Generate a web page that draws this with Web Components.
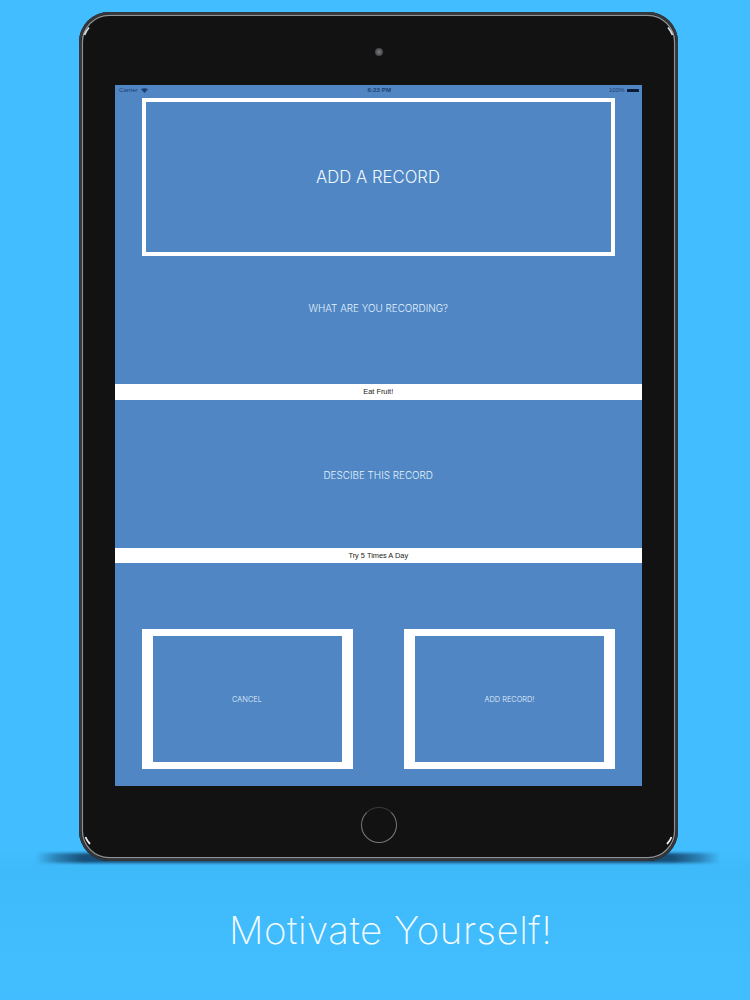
<!DOCTYPE html>
<html lang="en">
<head>
<meta charset="utf-8">
<title>Motivate Yourself!</title>
<style>
html,body{margin:0;padding:0;background:#42bdff;}
</style>
</head>
<body>
<promo-page>
  <tablet-frame>
    <status-bar></status-bar>
    <title-box>ADD A RECORD</title-box>
    <record-field label="WHAT ARE YOU RECORDING?" value="Eat Fruit!" height="128" shift="22"></record-field>
    <record-field label="DESCIBE THIS RECORD" value="Try 5 Times A Day" height="148" shift="-4"></record-field>
    <action-row>
      <action-button>CANCEL</action-button>
      <action-button>ADD RECORD!</action-button>
    </action-row>
  </tablet-frame>
  <span slot="caption">Motivate Yourself!</span>
</promo-page>
<script>
function define(name, html, init){
  customElements.define(name, class extends HTMLElement{
    constructor(){
      super();
      this.attachShadow({mode:'open'}).innerHTML = html;
    }
    connectedCallback(){ if(init) init(this, this.shadowRoot); }
  });
}

define('promo-page', `<style>
:host{display:flex;flex-direction:column;width:750px;height:1000px;overflow:hidden;position:relative;
  background:linear-gradient(180deg,#42bdff 0,#42bdff 85%,#3ebaf9 87%,#41bcfd 95%,#42bdff 100%);padding:12px 0 0 79px;box-sizing:border-box;}
.shadow{position:absolute;left:36px;top:853px;width:684px;height:10px;filter:blur(1.5px);
  background:linear-gradient(90deg,rgba(20,72,112,0) 0,rgba(24,80,122,.55) 3%,rgba(20,72,112,.95) 7%,rgba(20,72,112,.95) 93%,rgba(24,80,122,.55) 97%,rgba(20,72,112,0) 100%);}
.device{position:relative;z-index:1;width:599px}
.cap{position:relative;z-index:1;font:250 38.5px/1 Inter,"Noto Sans",sans-serif;color:#f3fbff;margin:50px 0 0 150px;
  letter-spacing:.5px;white-space:nowrap}
</style>
<div class="shadow"></div>
<div class="device"><slot></slot></div>
<div class="cap"><slot name="caption"></slot></div>`);

define('tablet-frame', `<style>
:host{display:block;position:relative;width:599px;height:849px;box-sizing:border-box;background:#121212;border-radius:30px;
  padding:73px 36.5px 75px 36px;}
.screen{width:526.5px;height:701px;background:#4f86c3;display:flex;flex-direction:column;position:relative}
.metal{position:absolute;left:0;top:0;width:599px;height:849px;pointer-events:none}
.cam{position:absolute;left:296px;top:36px;width:8px;height:8px;border-radius:50%;
  background:radial-gradient(circle,#7c7e80 0,#55575a 45%,#2c2d2f 100%)}
.home{position:absolute;left:281.5px;top:794.5px;width:36px;height:36px;box-sizing:border-box;border-radius:50%;
  border:1.2px solid #77787a;border-top-color:#3a3a3b;}
</style>
<svg class="metal" viewBox="0 0 599 849" aria-hidden="true">
  <defs>
    <linearGradient id="top" x1="0" x2="1" y1="0" y2="0">
      <stop offset="0" stop-color="#26292c"/><stop offset=".14" stop-color="#2e3134"/><stop offset=".3" stop-color="#9a9a9a"/>
      <stop offset=".72" stop-color="#a3a3a3"/><stop offset=".87" stop-color="#34363a"/><stop offset="1" stop-color="#26292c"/>
    </linearGradient>
    <linearGradient id="bot" x1="0" x2="1" y1="0" y2="0">
      <stop offset="0" stop-color="#6a6c70"/><stop offset=".3" stop-color="#8f8f90"/><stop offset=".7" stop-color="#a0a0a0"/><stop offset="1" stop-color="#6a6c6e"/>
    </linearGradient>
  </defs>
  <rect x="1.2" y="1.2" width="596.6" height="846.6" rx="29" fill="none" stroke="#34383c" stroke-width="2.4"/>
  <rect x="3.4" y="3.4" width="592.2" height="842.2" rx="26.8" fill="none" stroke="#8f9294" stroke-width="1.3"/>
  <path d="M28 2.6H571" stroke="url(#top)" stroke-width="3.4" fill="none"/>
  <path d="M28 846H571" stroke="url(#bot)" stroke-width="3.2" fill="none"/>
  <path d="M5.5 23Q7 19 10 15.5" stroke="#d8dde0" stroke-width="1.8" fill="none"/>
  <path d="M593.5 23Q592 19 589 15.5" stroke="#d8dde0" stroke-width="1.8" fill="none"/>
  <path d="M6.5 825Q8 829 11 832" stroke="#eef1f3" stroke-width="1.8" fill="none"/>
  <path d="M592.5 825Q591 829 588 832" stroke="#eef1f3" stroke-width="1.8" fill="none"/>
</svg>
<div class="cam"></div>
<div class="home"></div>
<div class="screen"><slot></slot></div>`);

define('status-bar', `<style>
:host{display:flex;height:13px;flex:none;align-items:center;justify-content:space-between;padding:0 2px 2px 4px;box-sizing:border-box;
  font:400 6.1px/1 "Liberation Sans",sans-serif;color:#1f3f70;position:relative}
.l,.r{display:flex;align-items:center;gap:3px;width:100px}
.r{justify-content:flex-end}
.c{font-weight:700;letter-spacing:.1px}
.batt{width:12px;height:3.6px;background:#0d1c35;border-radius:.6px;margin-right:0}
</style>
<div class="l"><span>Carrier</span>
<svg width="7" height="5" viewBox="0 0 7 5"><path d="M0 1.2Q3.5-.8 7 1.2L3.5 5Z" fill="#1f3f70"/></svg></div>
<div class="c">6:23 PM</div>
<div class="r"><span>100%</span><span class="batt"></span></div>`);

define('title-box', `<style>
:host{display:flex;flex:none;align-items:center;justify-content:center;box-sizing:border-box;height:158px;margin:0 27px 0 26.5px;
  border:4px solid #fff;font:300 16.7px/1 Inter,"Noto Sans",sans-serif;color:#f0f8ff;padding-top:1px}
</style><slot></slot>`);

define('record-field', `<style>
:host{display:block;flex:none}
.lab{display:flex;align-items:center;justify-content:center;box-sizing:border-box;font:300 9.9px/1 Inter,"Noto Sans",sans-serif;color:#e4f2ff;}
.val{height:15.5px;background:#fff;display:flex;align-items:center;justify-content:center;
  font:400 7.4px/1 "Liberation Sans",sans-serif;color:#222;}
</style>
<div class="lab"></div><div class="val"></div>`, (el, root)=>{
  const lab = root.querySelector('.lab');
  lab.textContent = el.getAttribute('label');
  lab.style.height = el.getAttribute('height')+'px';
  const s = +el.getAttribute('shift');
  if(s>0) lab.style.paddingBottom = s+'px'; else lab.style.paddingTop = (-s)+'px';
  root.querySelector('.val').textContent = el.getAttribute('value');
});

define('action-row', `<style>
:host{display:flex;flex:none;justify-content:space-between;padding:65.5px 26.5px 0 26.5px}
</style><slot></slot>`);

define('action-button', `<style>
:host{display:flex;align-items:center;justify-content:center;box-sizing:border-box;width:211px;height:140.5px;padding-top:1px;
  border:solid #fff;border-width:7.5px 11px;font:300 7.4px/1 Inter,"Noto Sans",sans-serif;color:#e4f2ff}
</style><slot></slot>`);
</script>
</body>
</html>
